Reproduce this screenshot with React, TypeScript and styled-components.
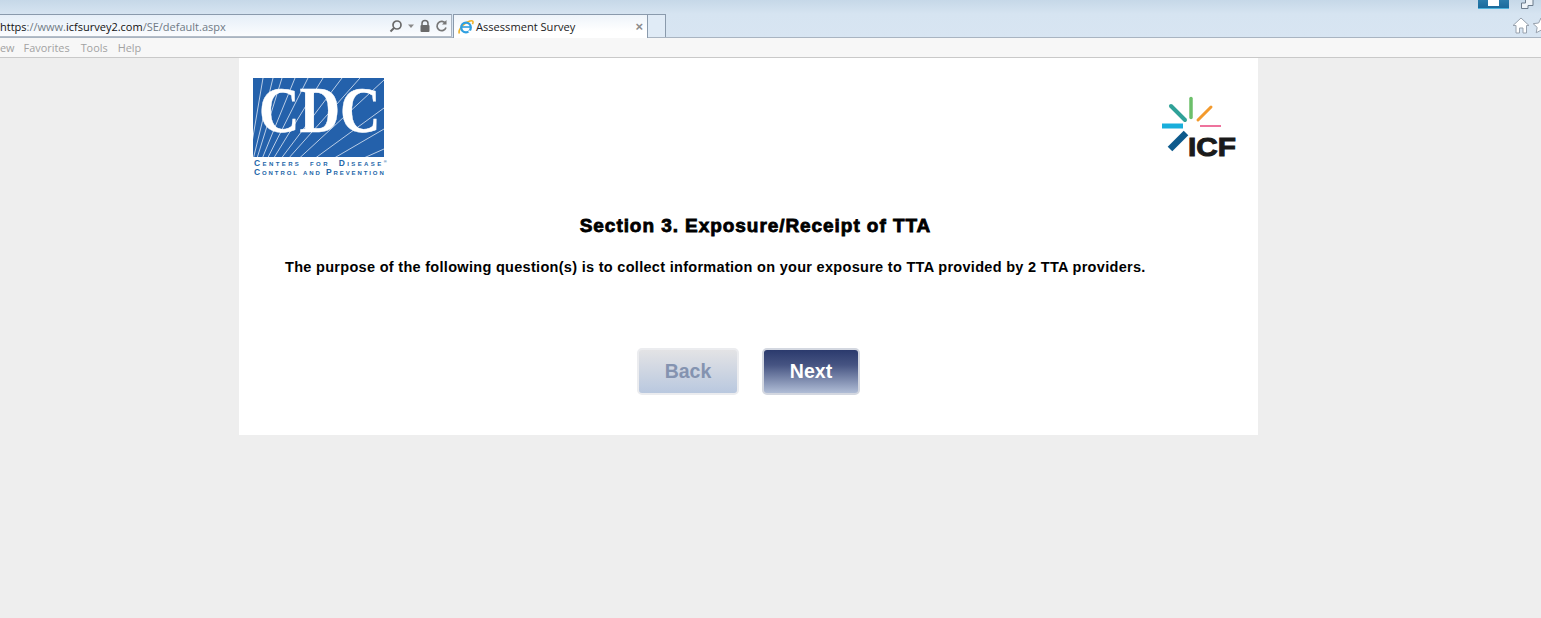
import React from "react";
import styled, { createGlobalStyle } from "styled-components";

const GlobalStyle = createGlobalStyle`
  html, body {
    margin: 0;
    padding: 0;
    height: 100%;
    background: #eeeeee;
    overflow: hidden;
  }
  #root {
    height: 100%;
  }
`;

const Page = styled.div`
  display: flex;
  flex-direction: column;
  height: 618px;
  overflow: hidden;
  font-family: "Liberation Sans", Arial, sans-serif;
`;

const Chrome = styled.div`
  height: 38px;
  flex: none;
  box-sizing: border-box;
  background: linear-gradient(#c6d8e8 0, #d6e4f1 14px, #d8e5f2 100%);
  border-bottom: 1px solid #a9b4c1;
  display: flex;
  flex-direction: column;
  position: relative;
`;

const WindowButtons = styled.div`
  position: absolute;
  top: 0;
  left: 1478px;
  display: flex;
  gap: 11px;
`;

const MaxButton = styled.div`
  width: 31px;
  height: 8px;
  background: linear-gradient(#2a7cab, #1a6a9c);
  border-bottom: 1px solid #4db3dc;
  display: flex;
  justify-content: center;
`;

const MaxGlyph = styled.div`
  width: 11px;
  height: 6px;
  background: #fff;
`;

const RestoreButton = styled.svg`
  width: 16px;
  height: 9px;
`;

const TabRow = styled.div`
  margin-top: 14px;
  display: flex;
  height: 23px;
  align-items: stretch;
`;

const AddressBar = styled.div`
  width: 452px;
  box-sizing: border-box;
  flex: none;
  display: flex;
  align-items: center;
  background: linear-gradient(#e6eff8, #fbfcfe);
  border-top: 1px solid #8a9aac;
  border-right: 1px solid #a9b4c1;
  border-bottom: 1px solid #b4bdc8;
  overflow: hidden;
`;

const Url = styled.div`
  flex: 1;
  font-family: "Open Sans", "Noto Sans", sans-serif;
  font-size: 11px;
  color: #6f7a85;
  white-space: nowrap;
  padding-top: 1px;
`;

const UrlHost = styled.span`
  color: #111;
`;

const AddressIcons = styled.div`
  display: flex;
  align-items: center;
  gap: 4px;
  padding-right: 3px;
`;

const Tab = styled.div`
  width: 195px;
  margin-left: 1px;
  box-sizing: border-box;
  flex: none;
  display: flex;
  align-items: center;
  gap: 2px;
  padding: 0 4px 0 4px;
  background: linear-gradient(#eef4fa, #ffffff 70%);
  border: 1px solid #8a9aac;
  border-bottom: none;
  height: 24px;
`;

const TabTitle = styled.div`
  flex: 1;
  font-family: "Open Sans", "Noto Sans", sans-serif;
  font-size: 11.1px;
  color: #222;
  white-space: nowrap;
`;

const TabClose = styled.div`
  font-size: 13px;
  font-weight: bold;
  color: #8c8c8c;
  line-height: 1;
`;

const NewTab = styled.div`
  width: 18px;
  flex: none;
  box-sizing: border-box;
  background: #e0ebf6;
  border: 1px solid #8a9aac;
  border-left: none;
  border-bottom: none;
`;

const RightIcons = styled.div`
  position: absolute;
  left: 1512px;
  top: 17px;
  display: flex;
  gap: 2px;
`;

const MenuBar = styled.div`
  height: 20px;
  flex: none;
  box-sizing: border-box;
  background: #f7f7f7;
  border-bottom: 1px solid #c9c9c9;
  display: flex;
  align-items: center;
  overflow: hidden;
`;

const MenuItem = styled.div<{ $gap: number }>`
  font-family: "Open Sans", "Noto Sans", sans-serif;
  font-size: 10.9px;
  color: #a2a2a2;
  margin-left: ${(p) => p.$gap}px;
  white-space: nowrap;
`;

const Canvas = styled.div`
  flex: 1;
  background: #eeeeee;
`;

const Panel = styled.div`
  margin-left: 239px;
  width: 1019px;
  height: 377px;
  background: #fff;
  display: flex;
  flex-direction: column;
`;

const LogoRow = styled.div`
  display: flex;
  justify-content: space-between;
  align-items: flex-start;
  padding: 20px 19px 0 14px;
  height: 100px;
  box-sizing: border-box;
  flex: none;
`;

const CdcWrap = styled.div`
  width: 140px;
`;

const CdcBadge = styled.div`
  position: relative;
  width: 131px;
  height: 79px;
`;

const CdcMark = styled.svg`
  display: block;
  width: 131px;
  height: 79px;
`;

const CdcLetters = styled.div`
  position: absolute;
  left: 6px;
  top: -1px;
  font-family: "Liberation Serif", serif;
  font-weight: bold;
  font-size: 66px;
  line-height: 66px;
  color: #fff;
  -webkit-text-stroke: 0.4px #fff;
  transform: scaleX(0.85);
  transform-origin: left top;
`;

const CdcCaption = styled.div`
  padding-left: 1px;
  font-size: 8.5px;
  line-height: 9px;
  font-weight: bold;
  color: #2366a8;
  font-variant: small-caps;
  white-space: nowrap;
`;

const CaptionTop = styled.div`
  letter-spacing: 2.4px;
  word-spacing: 4px;
`;

const CaptionBottom = styled.div`
  letter-spacing: 1.9px;
`;

const Registered = styled.span`
  font-size: 4px;
  letter-spacing: 0;
  vertical-align: 3px;
`;

const IcfLogo = styled.svg`
  width: 80px;
  height: 66px;
  margin-top: 18px;
`;

const Heading = styled.h1`
  margin: 56px 0 0;
  padding-left: 14px;
  text-align: center;
  font-size: 19px;
  line-height: 24px;
  font-weight: bold;
  letter-spacing: 0.94px;
  color: #000;
  -webkit-text-stroke: 0.8px #000;
`;

const Intro = styled.p`
  margin: 20px 0 0 46px;
  font-size: 14.5px;
  line-height: 18px;
  font-weight: bold;
  letter-spacing: 0.3px;
  color: #000;
  white-space: nowrap;
`;

const ButtonRow = styled.div`
  display: flex;
  margin: 72px 0 0 398px;
  gap: 23px;
`;

const NavButton = styled.div<{ $primary?: boolean }>`
  width: ${(p) => (p.$primary ? 98 : 102)}px;
  height: 47px;
  box-sizing: border-box;
  border-radius: 5px;
  border: 2px solid ${(p) => (p.$primary ? "#d3d7e0" : "#ebecef")};
  background: ${(p) =>
    p.$primary
      ? "linear-gradient(#2b3a6d 0, #465482 35%, #b0bdd6 100%)"
      : "linear-gradient(#e3e3e5 0, #b9c8df 100%)"};
  color: ${(p) => (p.$primary ? "#fff" : "#8493b0")};
  display: flex;
  align-items: center;
  justify-content: center;
  font-size: 19.5px;
  font-weight: bold;
`;

const RAY_ENDS: [number, number][] = [
  [10, 0], [20, 0], [29, 0], [42, 0], [55, 0], [70, 0], [89, 0], [107, 0], [131, 2],
  [131, 30], [131, 51], [131, 71],
];

const Sunburst = () => (
  <g stroke="#dfe9f5" strokeWidth="0.8" clipPath="url(#cdc-clip)">
    {RAY_ENDS.map(([x, y], i) => (
      <line key={i} x1={x} y1={y} x2={-13} y2={135} />
    ))}
  </g>
);

export default function App() {
  return (
    <Page>
      <GlobalStyle />
      <Chrome>
        <WindowButtons>
          <MaxButton>
            <MaxGlyph />
          </MaxButton>
          <RestoreButton viewBox="0 0 16 9">
            <path d="M5.500 0v3H1.500V8.500H8V5.500h5V0" fill="#eef3f8" stroke="#6d7c8c" />
          </RestoreButton>
        </WindowButtons>
        <TabRow>
          <AddressBar>
            <Url>
              <UrlHost>https</UrlHost>://www.<UrlHost>icfsurvey2.com</UrlHost>/SE/default.aspx
            </Url>
            <AddressIcons>
              <svg width="14" height="14" viewBox="0 0 14 14" fill="none">
                <circle cx="8" cy="6" r="4" stroke="#6a6a6a" strokeWidth="1.7" />
                <path d="M5 9l-3.500 3.500" stroke="#6a6a6a" strokeWidth="2" />
              </svg>
              <svg width="8" height="6" viewBox="0 0 8 6">
                <path d="M1 1.500h6L4 5z" fill="#8a8a8a" />
              </svg>
              <svg width="12" height="14" viewBox="0 0 12 14">
                <path d="M3 6V4.500a3 3 0 0 1 6 0V6" fill="none" stroke="#6a6a6a" strokeWidth="1.500" />
                <rect x="1.500" y="6" width="9" height="7" rx="1" fill="#6a6a6a" />
              </svg>
              <svg width="13" height="14" viewBox="0 0 13 14" fill="none">
                <path d="M10.500 4.500A4.600 4.600 0 1 0 11 8.500" stroke="#777" strokeWidth="1.700" />
                <path d="M11.500 1v4.500H7z" fill="#777" />
              </svg>
            </AddressIcons>
          </AddressBar>
          <Tab>
            <svg width="16" height="16" viewBox="0 0 16 16" fill="none">
              <path d="M1.500 14.500c-1.600-2 1.500-9 10.500-12.500 2.800-1 3.800.6 2.400 3.200" stroke="#f0b429" strokeWidth="1.600" />
              <circle cx="8" cy="8.500" r="4.800" stroke="#2f9fe0" strokeWidth="2.300" />
              <path d="M4 8h8.500" stroke="#2f9fe0" strokeWidth="1.600" />
              <path d="M10.500 12.300l3.500 .8" stroke="#fff" strokeWidth="2" />
            </svg>
            <TabTitle>Assessment Survey</TabTitle>
            <TabClose>×</TabClose>
          </Tab>
          <NewTab />
        </TabRow>
        <RightIcons>
          <svg width="18" height="17" viewBox="0 0 18 17">
            <path d="M1 8.500L9 1l8 7.500h-2.500V16h-3.500v-5H7.500v5H4V8.500z" fill="#fff" stroke="#98a2ae" strokeWidth="1" />
          </svg>
          <svg width="18" height="17" viewBox="0 0 18 17">
            <path d="M9 1l2.400 5 5.400.7-4 3.700 1 5.400L9 13.200 4.200 15.800l1-5.400-4-3.700 5.400-.7z" fill="#fff" stroke="#98a2ae" strokeWidth="1" />
          </svg>
        </RightIcons>
      </Chrome>
      <MenuBar>
        <MenuItem $gap={0}>ew</MenuItem>
        <MenuItem $gap={9}>Favorites</MenuItem>
        <MenuItem $gap={11}>Tools</MenuItem>
        <MenuItem $gap={10}>Help</MenuItem>
      </MenuBar>
      <Canvas>
        <Panel>
          <LogoRow>
            <CdcWrap>
              <CdcBadge>
                <CdcMark viewBox="0 0 131 79">
                  <clipPath id="cdc-clip">
                    <rect width="131" height="79" />
                  </clipPath>
                  <rect width="131" height="79" fill="#2461ab" />
                  <Sunburst />
                </CdcMark>
                <CdcLetters>CDC</CdcLetters>
              </CdcBadge>
              <CdcCaption>
                <CaptionTop>
                  Centers for Disease<Registered>®</Registered>
                </CaptionTop>
                <CaptionBottom>Control and Prevention</CaptionBottom>
              </CdcCaption>
            </CdcWrap>
            <IcfLogo viewBox="0 0 80 66">
              <g strokeLinecap="round" fill="none">
                <path d="M32 2.500v19" stroke="#6cbf6a" strokeWidth="3.500" />
                <path d="M12 10l14 14" stroke="#2fa198" strokeWidth="4" />
                <path d="M52 11L39 24" stroke="#f39a2d" strokeWidth="3" />
              </g>
              <g fill="none">
                <path d="M3 30h21" stroke="#19aedb" strokeWidth="5" />
                <path d="M41 30h21" stroke="#e9457c" strokeWidth="1.500" />
                <path d="M27 37L11 53" stroke="#0d5a8c" strokeWidth="6.500" />
              </g>
              <text
                x="29"
                y="60"
                fontFamily="Liberation Sans, sans-serif"
                fontWeight="700"
                fontSize="26.5"
                textLength="48"
                lengthAdjust="spacingAndGlyphs"
                fill="#1a1a1a"
                stroke="#1a1a1a"
                strokeWidth="1"
              >
                ICF
              </text>
            </IcfLogo>
          </LogoRow>
          <Heading>Section 3. Exposure/Receipt of TTA</Heading>
          <Intro>
            The purpose of the following question(s) is to collect information on your exposure to TTA provided by 2 TTA providers.
          </Intro>
          <ButtonRow>
            <NavButton>Back</NavButton>
            <NavButton $primary>Next</NavButton>
          </ButtonRow>
        </Panel>
      </Canvas>
    </Page>
  );
}
